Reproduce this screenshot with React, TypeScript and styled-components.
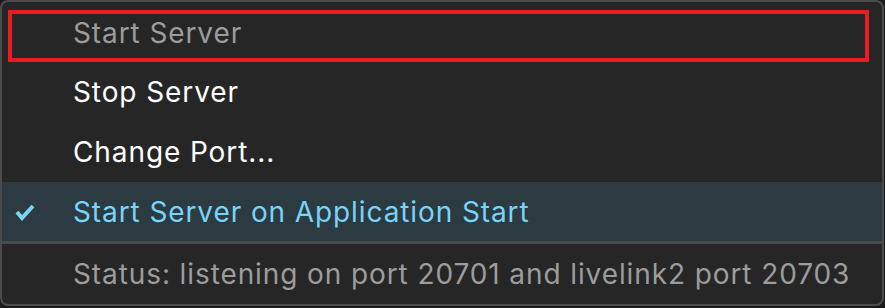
import styled, { createGlobalStyle } from "styled-components";

const GlobalStyle = createGlobalStyle`
  html, body {
    margin: 0;
    padding: 0;
    background: #1b1b1b;
  }
  body {
    font-family: Inter, "Noto Sans", "Liberation Sans", sans-serif;
  }
`;

const Menu = styled.div`
  box-sizing: border-box;
  width: 884px;
  height: 306px;
  background: #262626;
  border: 2px solid #4b4b4b;
  border-radius: 8px;
  padding-top: 1px;
  display: flex;
  flex-direction: column;
  overflow: hidden;
`;

const Item = styled.div<{ $tone?: "normal" | "disabled" | "checked" }>`
  position: relative;
  height: 60px;
  display: flex;
  align-items: center;
  padding-left: 71px;
  font-size: 28px;
  letter-spacing: 0.9px;
  color: ${(p) =>
    p.$tone === "disabled" ? "#9c9c9c" : p.$tone === "checked" ? "#78d3f8" : "#ffffff"};
  background: ${(p) => (p.$tone === "checked" ? "#2c3a41" : "transparent")};
`;

const Outline = styled.div`
  position: absolute;
  left: 6px;
  top: 7px;
  width: 861px;
  height: 52px;
  box-sizing: border-box;
  border: 4px solid #ed1c24;
`;

const Check = styled.svg`
  position: absolute;
  left: 13px;
  top: 21px;
  width: 20px;
  height: 18px;
`;

const Separator = styled.div`
  height: 3px;
  background: #4a4a4a;
`;

const App = () => {
  return (
    <>
      <GlobalStyle />
      <Menu>
        <Item $tone="disabled">
          <Outline />
          Start Server
        </Item>
        <Item>Stop Server</Item>
        <Item>Change Port...</Item>
        <Item $tone="checked">
          <Check viewBox="0 0 20 18">
            <polyline
              points="2,9 7,15 18,3"
              fill="none"
              stroke="#78d3f8"
              strokeWidth="4"
              strokeLinejoin="miter"
            />
          </Check>
          Start Server on Application Start
        </Item>
        <Separator />
        <Item $tone="disabled">Status: listening on port 20701 and livelink2 port 20703</Item>
      </Menu>
    </>
  );
};

export default App;
